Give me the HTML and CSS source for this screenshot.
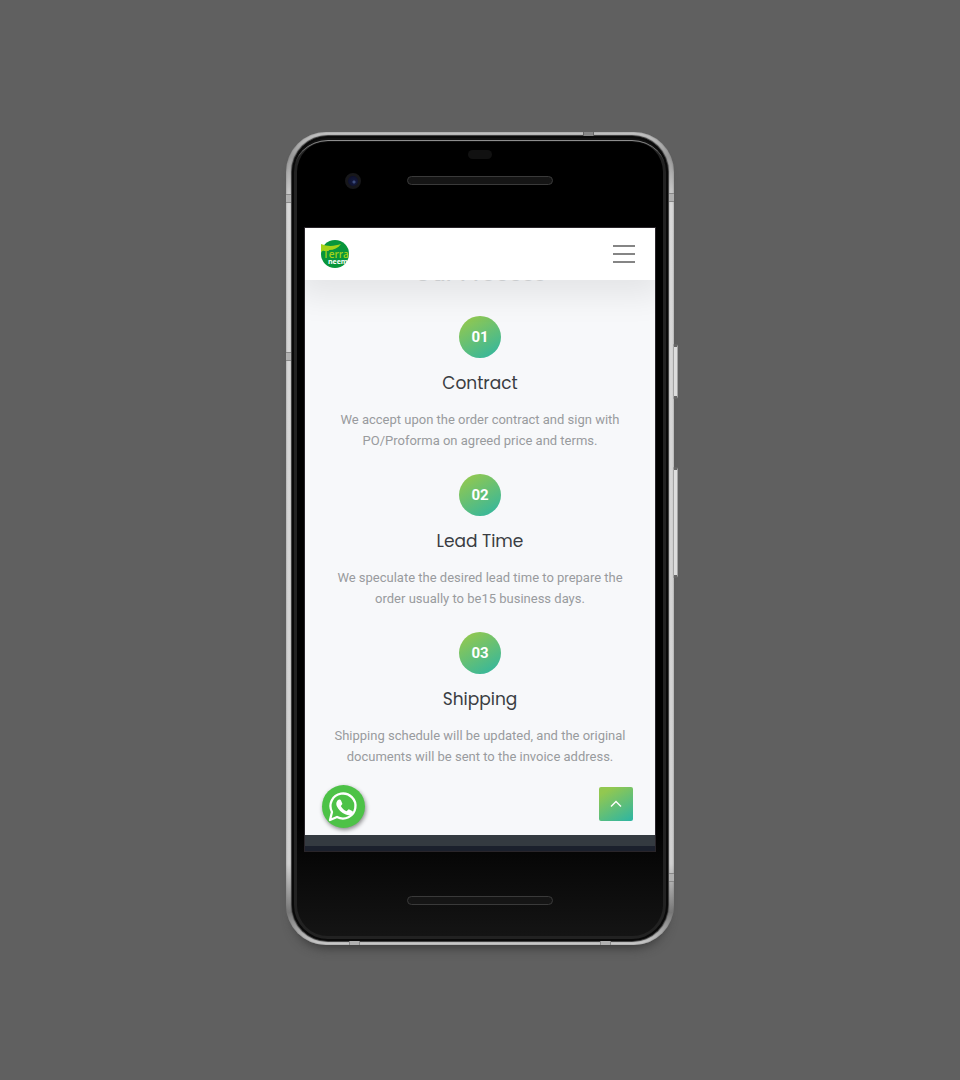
FILE: index.html
```html
<!DOCTYPE html>
<html lang="en">
<head>
<meta charset="utf-8">
<meta name="viewport" content="width=device-width, initial-scale=1">
<title>Terra Neem – Our Process</title>
<link rel="stylesheet" href="styles.css">
</head>
<body>
<div class="phone">
  <span class="side-button power"></span>
  <span class="side-button volume"></span>
  <span class="band band-top"></span>
  <span class="band band-bottom-left"></span>
  <span class="band band-bottom-right"></span>
  <span class="band band-left-upper"></span>
  <span class="band band-left-lower"></span>
  <span class="band band-right-upper"></span>
  <span class="band band-right-lower"></span>
  <div class="bezel">
    <div class="forehead">
      <span class="sensor"></span>
      <span class="speaker"></span>
      <span class="camera"></span>
    </div>
    <div class="screen">
      <header class="navbar">
        <a class="logo" href="#" aria-label="Terra neem">
          <svg viewBox="0 0 30 30" width="30" height="30">
            <circle cx="15" cy="15" r="14" fill="#08963b"/>
            <path d="M1 5c7 3 14 2 20 0-3 4-7 6-12 6H4L1 13z" fill="#a5d318"/>
            <text class="logo-terra" x="3" y="19">Terra</text>
            <text class="logo-neem" x="8" y="25">neem</text>
          </svg>
        </a>
        <button class="menu" aria-label="Open menu">
          <svg viewBox="0 0 24 20" width="24" height="20"><path d="M1 2h22M1 10h22M1 18h22" stroke="#858585" stroke-width="2"/></svg>
        </button>
      </header>
      <main class="process">
        <h2 class="heading">Our Process</h2>
        <section class="step">
          <span class="number">01</span>
          <h3 class="title">Contract</h3>
          <p class="text">We accept upon the order contract and sign with PO/Proforma on agreed price and terms.</p>
        </section>
        <section class="step">
          <span class="number">02</span>
          <h3 class="title">Lead Time</h3>
          <p class="text">We speculate the desired lead time to prepare the order usually to be15 business days.</p>
        </section>
        <section class="step">
          <span class="number">03</span>
          <h3 class="title">Shipping</h3>
          <p class="text">Shipping schedule will be updated, and the original documents will be sent to the invoice address.</p>
        </section>
      </main>
      <div class="footer"></div>
      <a class="whatsapp" href="#" aria-label="Chat on WhatsApp">
        <svg viewBox="0 0 43 43" width="43" height="43">
          <path d="M8 35l2-8a12.500 12.500 0 1 1 5 5z" fill="none" stroke="#fff" stroke-width="2.300" stroke-linejoin="round"/>
          <path d="M17 14.500c1-.3 1.600 0 2 1l1.300 3c.3 1-1 1.800-1.500 2.500 1.500 2.700 3.300 4.300 6 5.300.8-.8 1.500-2.200 2.400-1.900l3 1.500c1.200.6.8 2 0 3-1.500 1.700-4 1.700-6.500.7-4.200-1.700-7.500-5-9-8.600-1-2.500-.2-5.500 2.300-6.500z" fill="#fff"/>
        </svg>
      </a>
      <button class="to-top" aria-label="Back to top">
        <svg viewBox="0 0 12 8" width="12" height="8"><path d="M1 6.500L6 1.500l5 5" fill="none" stroke="#fff" stroke-width="1.400"/></svg>
      </button>
    </div>
    <div class="chin"><span class="speaker"></span></div>
  </div>
</div>
</body>
</html>
```
FILE: styles.css
```css
* { box-sizing: border-box; }
body {
  margin: 0;
  min-height: 100vh;
  padding: 132px 16px;
  background: #606060;
  font-family: Roboto, "Liberation Sans", sans-serif;
}
.phone {
  position: relative;
  width: 100%;
  max-width: 388px;
  margin: 0 auto;
  padding: 4px 6px;
  border-radius: 40px;
  background: linear-gradient(#c8c8c8, #999 3%, #d8d8d8 9%, #d0d0d0 90%, #777 96%, #d0d0d0);
  box-shadow: inset 0 0 2px 0 #777, 0 10px 12px -8px #333;
}
.bezel {
  border-radius: 36px;
  background: linear-gradient(#000 85%, #090909 91%, #151515);
  box-shadow: inset 0 0 0 2px #090909, inset 0 4px 0 #111, inset 0 6px 1px -1px #999, inset 0 0 0 5px #222, 0 0 1px 1px #333;
}
.forehead {
  position: relative;
  height: 92px;
  display: flex;
  flex-direction: column;
  align-items: center;
  gap: 17px;
  padding-top: 14px;
}
.sensor {
  width: 24px;
  height: 9px;
  border-radius: 5px;
  background: #111;
}
.speaker {
  width: 146px;
  height: 9px;
  border: 1px solid #3a3a3a;
  border-radius: 5px;
  background: #151515;
}
.camera {
  position: absolute;
  left: 53px;
  top: 37px;
  width: 16px;
  height: 16px;
  border: 3px solid #17171a;
  border-radius: 50%;
  background: radial-gradient(circle at 60% 60%, #3c4c7c 1px, #13183a 2px, #0b0d24);
}
.screen {
  position: relative;
  margin: 0 13px;
  background: #f7f8fa;
  box-shadow: 0 0 0 1px #29252a;
}
.navbar {
  position: relative;
  z-index: 1;
  display: flex;
  align-items: center;
  justify-content: space-between;
  height: 52px;
  padding: 0 19px 0 15px;
  background: #fff;
  box-shadow: 0 8px 32px 8px rgba(0, 0, 0, .08);
  clip-path: inset(0 0 -60px 0);
}
.logo svg, .menu svg, .whatsapp svg, .to-top svg { display: block; }
.logo-terra {
  font: 600 10px "Open Sans", sans-serif;
  fill: #a5d318;
}
.logo-neem {
  font: bold 7px "Open Sans", sans-serif;
  fill: #fff;
}
.menu {
  padding: 0;
  border: 0;
  background: none;
}
.process {
  padding: 0 20px 45px;
  text-align: center;
}
.heading {
  margin: -20px 0 28px;
  font: 500 22px/28px Poppins, Inter, sans-serif;
  color: #d8dadc;
}
.step {
  display: flex;
  flex-direction: column;
  align-items: center;
  padding-bottom: 23px;
}
.number {
  display: grid;
  place-items: center;
  width: 42px;
  height: 42px;
  border-radius: 50%;
  background: linear-gradient(150deg, #92c850 10%, #2cb5a4 100%);
  color: #fff;
  font-size: 15px;
  font-weight: 700;
}
.title {
  margin: 13px 0 14px;
  font: 400 17px/24px Poppins, Inter, sans-serif;
  color: #3a3d42;
}
.text {
  margin: 0;
  font-size: 13px;
  line-height: 21px;
  color: #999b9e;
}
.footer {
  height: 16px;
  border-bottom: 5px solid #1b202c;
  background: #343a40;
}
.whatsapp {
  position: absolute;
  left: 17px;
  bottom: 23px;
  border-radius: 50%;
  background: #4dc247;
  box-shadow: 1px 2px 4px rgba(0, 0, 0, .45);
}
.to-top {
  position: absolute;
  right: 22px;
  bottom: 30px;
  display: grid;
  place-items: center;
  width: 34px;
  height: 34px;
  padding: 0;
  border: 0;
  border-radius: 2px;
  background: linear-gradient(150deg, #92c850 15%, #2cb5a4 100%);
}
.chin {
  display: flex;
  justify-content: center;
  height: 90px;
  padding-top: 45px;
}
.side-button {
  position: absolute;
  right: -4px;
  width: 5px;
  border: 1px solid #a5a5a5;
  border-block: 3px solid #666;
  border-radius: 2px;
  background: #ddd;
}
.power { top: 212px; height: 55px; }
.volume { top: 335px; height: 111px; }
.band {
  position: absolute;
  width: 5px;
  height: 9px;
  border: solid #888;
  border-width: 1px 0;
  background: #b0b0b0;
}
.band-top, .band-bottom-left, .band-bottom-right {
  width: 11px;
  height: 4px;
  border-width: 0 1px;
}
.band-top { top: 0; right: 80px; background: #888; border-color: #666; }
.band-bottom-left { bottom: 0; left: 63px; }
.band-bottom-right { bottom: 0; right: 63px; }
.band-left-upper { left: 0; top: 62px; }
.band-left-lower { left: 0; top: 220px; }
.band-right-upper { right: 0; top: 61px; }
.band-right-lower { right: 0; top: 741px; }
```
